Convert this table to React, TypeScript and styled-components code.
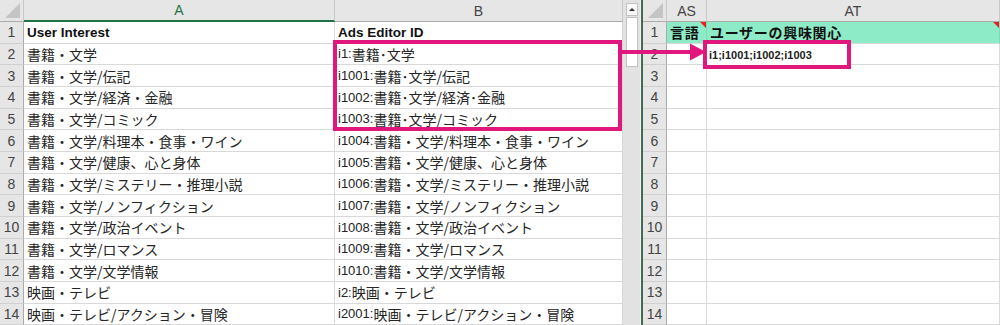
import React from "react";
import styled, { createGlobalStyle } from "styled-components";

const GRID = "#D9D9D9";
const HEAD_BG = "#E6E6E6";
const HEAD_LINE = "#C8C8C8";
const PINK = "#E0177D";
const GREEN = "#217346";
const MINT = "#8eebc7";
const ROW_H = 21.67;

const Global = createGlobalStyle`
  * { box-sizing: border-box; }
  html, body { margin: 0; padding: 0; background: #fff; overflow: hidden; }
  body { font-family: "Liberation Sans", "Noto Sans CJK JP", sans-serif; color: #222; }
`;

const Screen = styled.div`
    position: relative;
    display: flex;
    width: 1000px;
    height: 325px;
    overflow: hidden;
  `,
  Pane = styled.div<{ w?: number }>`
    display: flex;
    flex-direction: column;
    width: ${({ w }) => (w ? `${w}px` : "auto")};
    flex: ${({ w }) => (w ? "none" : "1")};
    overflow: hidden;
  `,
  HeadRow = styled.div`
    display: flex;
    height: 22px;
    flex: none;
  `,
  Row = styled.div`
    display: flex;
    height: ${ROW_H}px;
    flex: none;
  `,
  Corner = styled.div`
    position: relative;
    width: 24px;
    flex: none;
    background: ${HEAD_BG};
    border-right: 1px solid ${HEAD_LINE};
    border-bottom: 1px solid #ababab;
    &::after {
      content: "";
      position: absolute;
      right: 3px;
      bottom: 3px;
      border-left: 15px solid transparent;
      border-bottom: 15px solid #c4c4c4;
    }
  `,
  ColHead = styled.div<{ w: number; active?: boolean }>`
    width: ${({ w }) => w}px;
    flex: none;
    display: flex;
    align-items: center;
    justify-content: center;
    background: ${HEAD_BG};
    border-right: 1px solid ${HEAD_LINE};
    border-bottom: ${({ active }) =>
      active ? `2px solid ${GREEN}` : "1px solid #ababab"};
    color: ${({ active }) => (active ? GREEN : "#444")};
    font-size: 14px;
  `,
  RowHead = styled.div`
    width: 24px;
    flex: none;
    display: flex;
    align-items: center;
    justify-content: center;
    background: ${HEAD_BG};
    border-right: 1px solid #ababab;
    border-bottom: 1px solid #d0d0d0;
    color: #444;
    font-size: 14px;
  `,
  Cell = styled.div<{ w: number; fill?: string; note?: boolean }>`
    position: relative;
    width: ${({ w }) => w}px;
    flex: none;
    display: flex;
    align-items: center;
    padding-left: 3px;
    white-space: nowrap;
    overflow: hidden;
    background: ${({ fill }) => fill || "#fff"};
    border-right: 1px solid ${({ fill }) => (fill ? "#7fd9b6" : GRID)};
    border-bottom: 1px solid ${GRID};
    &::after {
      content: "";
      display: ${({ note }) => (note ? "block" : "none")};
      position: absolute;
      top: 0;
      right: 0;
      border-left: 6px solid transparent;
      border-top: 6px solid #e0261b;
    }
  `,
  Head = styled.span`
    font-size: 13.5px;
    font-weight: 700;
    color: #111;
  `,
  Id = styled.span`
    font-size: 13px;
    color: #222;
  `,
  Jp = styled.span`
    font-family: "Noto Sans CJK JP", sans-serif;
    font-size: 14px;
    color: #262626;
  `,
  Title = styled.span`
    font-family: "Noto Sans CJK JP", sans-serif;
    font-size: 14px;
    font-weight: 700;
    letter-spacing: 0.7px;
    color: #111;
  `,
  ScrollBar = styled.div`
    width: 17px;
    flex: none;
    display: flex;
    flex-direction: column;
    align-items: center;
    gap: 1px;
    padding-top: 3px;
    background: #e2e2e2;
  `,
  ScrollBtn = styled.div`
    width: 12px;
    height: 13px;
    display: flex;
    align-items: center;
    justify-content: center;
    background: #f7f7f7;
    border: 1px solid #c2c2c2;
    &::after {
      content: "";
      border-left: 3px solid transparent;
      border-right: 3px solid transparent;
      border-bottom: 3px solid #333;
    }
  `,
  Thumb = styled.div`
    width: 12px;
    height: 50px;
    background: #fff;
    border: 1px solid #c2c2c2;
  `,
  Splitter = styled.div`
    width: 3px;
    flex: none;
    background: #3f6b53;
    border-left: 1px solid #f2f2f2;
  `,
  // annotation boxes drawn over the sheet
  SourceBox = styled.div`
    position: absolute;
    left: 333px;
    top: 40px;
    width: 289px;
    height: 91px;
    border: 4px solid ${PINK};
    pointer-events: none;
  `,
  TargetBox = styled.div`
    position: absolute;
    left: 703px;
    top: 40px;
    width: 148px;
    height: 29px;
    display: flex;
    align-items: center;
    padding-left: 2px;
    background: #fff;
    border: 4px solid ${PINK};
  `,
  TargetText = styled.span`
    font-size: 11px;
    font-weight: 700;
    color: #222;
  `,
  Arrow = styled.svg`
    position: absolute;
    left: 622px;
    top: 40px;
    pointer-events: none;
  `;

const colA = [
  "書籍・文学",
  "書籍・文学/伝記",
  "書籍・文学/経済・金融",
  "書籍・文学/コミック",
  "書籍・文学/料理本・食事・ワイン",
  "書籍・文学/健康、心と身体",
  "書籍・文学/ミステリー・推理小説",
  "書籍・文学/ノンフィクション",
  "書籍・文学/政治イベント",
  "書籍・文学/ロマンス",
  "書籍・文学/文学情報",
  "映画・テレビ",
  "映画・テレビ/アクション・冒険",
];

const colB: [string, string][] = [
  ["i1:", "書籍･文学"],
  ["i1001:", "書籍･文学/伝記"],
  ["i1002:", "書籍･文学/経済･金融"],
  ["i1003:", "書籍･文学/コミック"],
  ["i1004:", "書籍・文学/料理本・食事・ワイン"],
  ["i1005:", "書籍・文学/健康、心と身体"],
  ["i1006:", "書籍・文学/ミステリー・推理小説"],
  ["i1007:", "書籍・文学/ノンフィクション"],
  ["i1008:", "書籍・文学/政治イベント"],
  ["i1009:", "書籍・文学/ロマンス"],
  ["i1010:", "書籍・文学/文学情報"],
  ["i2:", "映画・テレビ"],
  ["i2001:", "映画・テレビ/アクション・冒険"],
];

const App = () => {
  return (
    <>
      <Global />
      <Screen>
        <Pane w={623}>
          <HeadRow>
            <Corner />
            <ColHead w={311} active>
              A
            </ColHead>
            <ColHead w={288}>B</ColHead>
          </HeadRow>
          <Row>
            <RowHead>1</RowHead>
            <Cell w={311}>
              <Head>User Interest</Head>
            </Cell>
            <Cell w={288}>
              <Head>Ads Editor ID</Head>
            </Cell>
          </Row>
          {colA.map((a, i) => (
            <Row key={a}>
              <RowHead>{i + 2}</RowHead>
              <Cell w={311}>
                <Jp>{a}</Jp>
              </Cell>
              <Cell w={288}>
                <Id>{colB[i][0]}</Id>
                <Jp>{colB[i][1]}</Jp>
              </Cell>
            </Row>
          ))}
        </Pane>

        <ScrollBar>
          <ScrollBtn />
          <Thumb />
        </ScrollBar>
        <Splitter />

        <Pane>
          <HeadRow>
            <Corner />
            <ColHead w={40}>AS</ColHead>
            <ColHead w={293}>AT</ColHead>
          </HeadRow>
          <Row>
            <RowHead>1</RowHead>
            <Cell w={40} fill={MINT} note>
              <Title>言語</Title>
            </Cell>
            <Cell w={293} fill={MINT} note>
              <Title>ユーザーの興味関心</Title>
            </Cell>
          </Row>
          {colA.map((a, i) => (
            <Row key={a}>
              <RowHead>{i + 2}</RowHead>
              <Cell w={40} />
              <Cell w={293} />
            </Row>
          ))}
        </Pane>

        <SourceBox />
        <TargetBox>
          <TargetText>i1;i1001;i1002;i1003</TargetText>
        </TargetBox>
        <Arrow width="86" height="24" viewBox="0 0 86 24">
          <line x1="0" y1="12" x2="70" y2="12" stroke={PINK} strokeWidth="4" />
          <polygon points="68,3.5 84,12 68,20.5" fill={PINK} />
        </Arrow>
      </Screen>
    </>
  );
};

export default App;
